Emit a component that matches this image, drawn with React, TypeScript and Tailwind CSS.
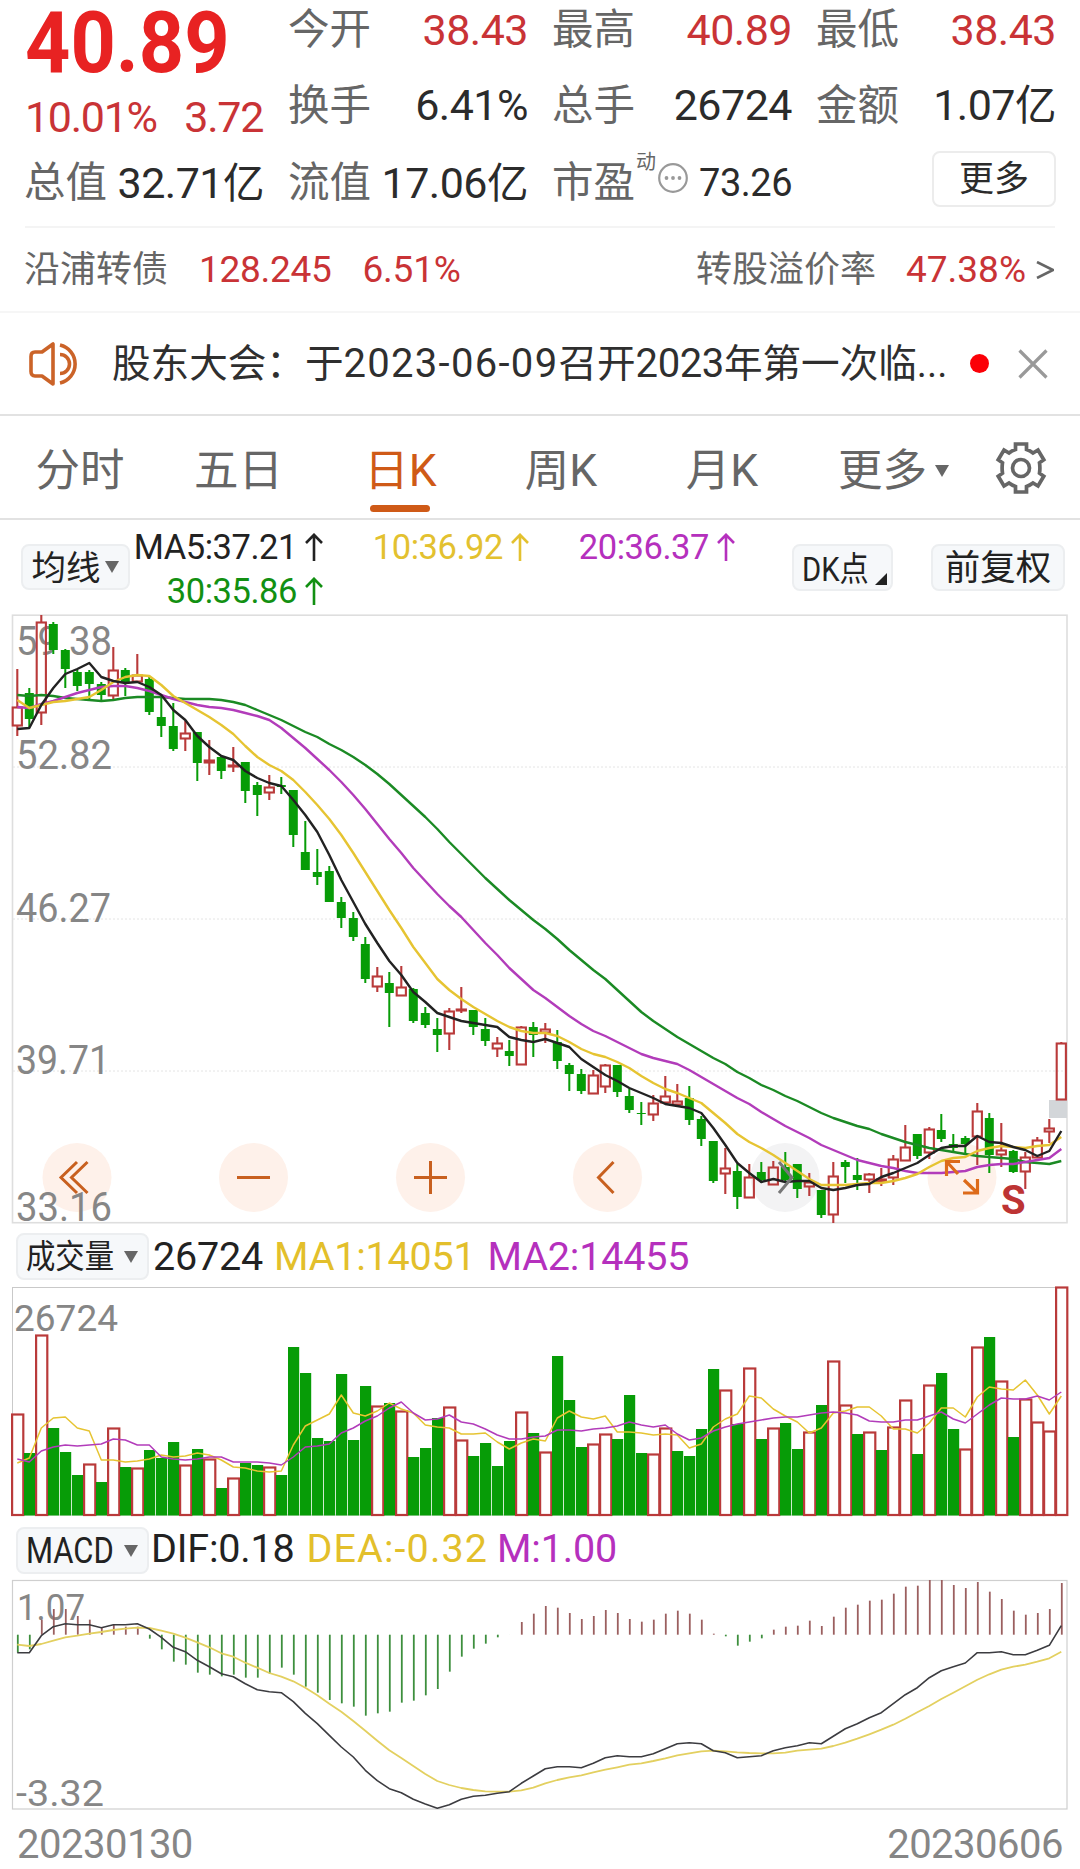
import type { ReactNode } from "react";

// [direction, high, body top, body bottom, low, volume top]
type Candle = ["r" | "g", number, number, number, number, number];

const STEP = 12;
const X0 = 17.3;
const xAt = (i: number) => X0 + i * STEP;

const candles: Candle[] = [
  ["r", 69, 107, 126, 136, 134], ["g", 88, 93, 119, 127, 173], ["r", 15, 22, 113, 125, 55], ["g", 22, 24, 50, 54, 148],
  ["g", 49, 50, 69, 88, 172], ["g", 70, 72, 86, 91, 195], ["g", 70, 72, 84, 101, 184], ["g", 82, 84, 95, 101, 202],
  ["r", 47, 70, 96, 99, 148], ["g", 68, 70, 82, 96, 187], ["r", 54, 75, 82, 82, 188], ["g", 77, 79, 112, 115, 170],
  ["g", 95, 117, 126, 137, 178], ["g", 103, 126, 149, 151, 162], ["r", 121, 133, 139, 151, 185], ["g", 132, 132, 163, 181, 169],
  ["r", 140, 160, 163, 175, 179], ["g", 156, 157, 171, 179, 208], ["r", 147, 165, 167, 172, 198], ["g", 162, 162, 191, 203, 183],
  ["g", 182, 185, 195, 216, 185], ["r", 175, 187, 193, 200, 187], ["g", 177, 185, 187, 194, 195], ["g", 190, 190, 235, 247, 67],
  ["g", 221, 252, 270, 270, 93], ["g", 249, 272, 277, 285, 158], ["g", 266, 271, 302, 302, 161], ["g", 297, 302, 318, 328, 94],
  ["g", 312, 318, 337, 341, 160], ["g", 337, 344, 379, 383, 106], ["r", 367, 376, 387, 392, 126], ["g", 372, 383, 393, 427, 123],
  ["r", 366, 387, 396, 396, 131], ["g", 388, 389, 421, 423, 177], ["g", 407, 413, 425, 428, 168], ["g", 418, 429, 435, 452, 138],
  ["r", 408, 411, 434, 450, 127], ["r", 387, 409, 411, 413, 160], ["g", 410, 410, 427, 435, 176], ["g", 418, 429, 441, 446, 163],
  ["r", 437, 443, 449, 457, 186], ["g", 440, 451, 456, 466, 161], ["r", 426, 427, 465, 465, 132], ["g", 422, 427, 435, 457, 153],
  ["r", 423, 429, 433, 443, 172], ["g", 430, 442, 461, 469, 76], ["g", 463, 465, 474, 491, 120], ["g", 469, 474, 491, 494, 167],
  ["r", 470, 475, 494, 494, 164], ["r", 464, 465, 487, 493, 154], ["g", 465, 465, 492, 497, 159], ["g", 489, 496, 510, 513, 115],
  ["g", 502, 513, 514, 525, 173], ["r", 495, 503, 515, 521, 174], ["r", 476, 496, 503, 503, 148], ["r", 484, 501, 505, 505, 171],
  ["g", 486, 498, 520, 525, 176], ["g", 516, 519, 539, 546, 149], ["g", 541, 541, 581, 583, 89], ["r", 548, 568, 574, 594, 110],
  ["g", 564, 571, 597, 609, 144], ["r", 564, 577, 598, 598, 88], ["g", 562, 572, 580, 583, 159], ["r", 561, 567, 585, 585, 148],
  ["g", 552, 567, 580, 583, 143], ["g", 564, 564, 589, 598, 169], ["r", 573, 582, 587, 596, 152], ["g", 590, 590, 615, 618, 125],
  ["r", 562, 576, 615, 623, 81], ["g", 560, 562, 567, 583, 125], ["g", 558, 575, 580, 590, 154], ["r", 573, 574, 580, 593, 152],
  ["r", 568, 579, 582, 586, 170], ["r", 555, 559, 578, 585, 147], ["r", 525, 547, 561, 561, 120], ["g", 534, 534, 556, 559, 174],
  ["r", 527, 529, 553, 559, 105], ["g", 514, 530, 539, 542, 93], ["g", 534, 544, 548, 553, 149], ["g", 536, 538, 544, 554, 169],
  ["r", 503, 511, 537, 565, 67], ["g", 513, 518, 555, 573, 57], ["r", 523, 550, 555, 567, 101], ["g", 550, 551, 572, 573, 157],
  ["r", 552, 557, 572, 589, 119], ["r", 537, 540, 558, 558, 142], ["r", 519, 528, 532, 543, 151], ["r", 442, 443, 500, 500, 7],
];

// days whose volume bar has the other colour than the candle
const hollowVolume = new Set([6, 69, 79]);
const solidVolume = new Set([40, 55, 72]);

const ma5 = [129, 128, 105, 88, 74, 69, 63, 77, 81, 83, 82, 87, 95, 110, 120, 136, 147, 156, 160, 171, 178, 183, 186, 200, 215, 232, 255, 280, 302, 324, 343, 361, 375, 392, 402, 413, 417, 421, 423, 425, 427, 437, 440, 442, 439, 443, 447, 459, 467, 475, 481, 488, 493, 498, 504, 506, 508, 513, 528, 545, 563, 573, 582, 579, 582, 581, 581, 588, 590, 588, 585, 584, 577, 573, 568, 563, 555, 548, 546, 546, 536, 542, 543, 547, 550, 556, 551, 531];
const ma10 = [100, 108, 105, 102, 101, 99, 97, 90, 82, 77, 75, 76, 85, 96, 103, 110, 117, 125, 134, 146, 157, 165, 171, 180, 192, 205, 219, 235, 253, 272, 291, 310, 328, 347, 363, 379, 390, 399, 407, 414, 421, 427, 431, 433, 433, 436, 442, 449, 454, 457, 462, 468, 476, 483, 489, 493, 498, 503, 513, 523, 534, 542, 548, 555, 563, 571, 579, 585, 585, 585, 584, 583, 583, 581, 578, 574, 567, 561, 558, 557, 551, 548, 546, 547, 548, 546, 545, 537];
const ma20 = [107, 108, 104, 101, 97, 93, 90, 87, 86, 86, 88, 91, 95, 99, 102, 105, 107, 108, 110, 113, 116, 120, 128, 138, 148, 159, 170, 182, 195, 209, 224, 239, 253, 268, 281, 294, 306, 317, 330, 343, 355, 368, 379, 390, 398, 407, 416, 424, 431, 436, 442, 448, 454, 458, 461, 464, 470, 477, 484, 491, 498, 504, 512, 519, 526, 532, 538, 545, 550, 555, 560, 563, 566, 568, 571, 573, 573, 573, 572, 571, 567, 565, 564, 564, 562, 560, 558, 549];
const ma30 = [95, 96, 95, 96, 98, 99, 100, 101, 100, 98, 97, 97, 97, 98, 99, 99, 99, 100, 102, 105, 110, 115, 120, 126, 132, 137, 144, 150, 157, 165, 174, 184, 195, 206, 217, 229, 242, 254, 266, 278, 289, 300, 310, 320, 329, 339, 350, 360, 370, 379, 390, 401, 412, 421, 429, 437, 444, 451, 458, 464, 472, 478, 485, 490, 496, 501, 507, 513, 518, 522, 526, 529, 534, 538, 542, 545, 548, 550, 552, 554, 556, 557, 558, 559, 562, 563, 564, 561];

const volMa1 = [183, 178, 148, 138, 137, 148, 151, 180, 180, 182, 181, 179, 175, 177, 176, 173, 175, 180, 187, 188, 191, 192, 191, 165, 146, 140, 134, 115, 133, 136, 131, 123, 129, 133, 145, 147, 148, 154, 154, 153, 162, 169, 163, 159, 161, 138, 131, 137, 139, 136, 152, 152, 153, 155, 154, 155, 168, 164, 147, 139, 134, 116, 118, 129, 136, 142, 153, 148, 133, 131, 127, 127, 136, 149, 149, 153, 143, 128, 128, 137, 117, 107, 109, 110, 100, 115, 134, 116];
const volMa2 = [179, 182, 171, 167, 165, 166, 165, 164, 159, 160, 165, 165, 177, 179, 180, 179, 177, 177, 182, 182, 182, 183, 185, 177, 167, 166, 164, 153, 148, 141, 136, 128, 122, 133, 140, 139, 135, 142, 144, 149, 155, 159, 159, 157, 156, 150, 150, 151, 149, 148, 146, 142, 145, 147, 145, 154, 160, 158, 151, 147, 144, 142, 140, 138, 137, 137, 135, 133, 132, 133, 135, 141, 142, 142, 140, 140, 136, 132, 139, 143, 134, 125, 118, 119, 119, 116, 120, 112];

const macdBars = [398, 388, 299, 267, 267, 288, 299, 322, 315, 320, 320, 356, 388, 425, 434, 458, 464, 469, 464, 473, 473, 462, 443, 464, 500, 518, 540, 550, 560, 587, 580, 575, 548, 542, 526, 507, 455, 410, 386, 371, 352, 344, 306, 281, 258, 263, 279, 297, 288, 270, 279, 297, 305, 299, 281, 272, 281, 299, 341, 349, 377, 365, 355, 329, 320, 317, 302, 318, 290, 263, 254, 242, 239, 221, 200, 197, 180, 180, 195, 204, 186, 215, 237, 272, 284, 279, 267, 189];
const dif = [398, 398, 347, 320, 311, 314, 314, 323, 314, 314, 311, 327, 352, 382, 395, 421, 440, 461, 470, 491, 509, 515, 518, 545, 580, 611, 646, 681, 711, 751, 782, 806, 818, 838, 852, 865, 854, 838, 829, 826, 820, 815, 790, 768, 746, 740, 740, 743, 730, 713, 707, 710, 710, 701, 686, 671, 668, 671, 692, 698, 713, 710, 707, 692, 683, 677, 668, 671, 649, 626, 611, 593, 578, 551, 524, 503, 473, 452, 440, 429, 398, 398, 395, 404, 404, 391, 376, 317];
const dea = [374, 378, 372, 362, 352, 347, 341, 336, 330, 326, 323, 324, 332, 341, 353, 367, 382, 400, 410, 428, 443, 459, 470, 484, 503, 526, 551, 575, 603, 632, 662, 691, 714, 738, 762, 783, 795, 804, 810, 814, 815, 815, 811, 803, 790, 780, 772, 766, 757, 749, 742, 734, 730, 723, 715, 706, 700, 694, 692, 694, 697, 699, 700, 700, 698, 692, 689, 686, 678, 668, 656, 643, 629, 614, 596, 577, 558, 537, 518, 499, 479, 463, 449, 440, 434, 425, 415, 395];
const macdY = (v: number) => v / 3 - 50;
const MACD_ZERO = 64.7;

const RED = "#b93a3a";
const GREEN = "#079c07";

const points = (ys: number[]) => ys.map((y, i) => `${xAt(i).toFixed(1)},${y.toFixed(1)}`).join(" ");

function Line({ ys, color, width = 2.4 }: { ys: number[]; color: string; width?: number }) {
  return <polyline points={points(ys)} fill="none" stroke={color} strokeWidth={width} strokeLinejoin="round" />;
}

function AxisLabel({ x, y, width, size = 40, children }: { x: number; y: number; width: number; size?: number; children: ReactNode }) {
  return (
    <text x={x} y={y} fontSize={size} fill="#868686" textLength={width} lengthAdjust="spacingAndGlyphs">
      {children}
    </text>
  );
}

function Caret({ className }: { className?: string }) {
  return (
    <svg viewBox="0 0 14 12" className={`h-3 w-3.5 ${className ?? ""}`}>
      <path d="M0 0h14L7 12z" fill="currentColor" />
    </svg>
  );
}

function UpArrow() {
  return (
    <svg viewBox="0 0 18 28" className="ml-[8px] h-7 w-[18px]" fill="none" stroke="currentColor" strokeWidth="2.6">
      <path d="M9 28V2M1 10 9 1.8 17 10" />
    </svg>
  );
}

function Quote({ label, value, red }: { label: string; value: ReactNode; red?: boolean }) {
  return (
    <div className="flex items-center justify-between pt-0.5">
      <span className="-ml-px text-[41.500px] text-[#666]">{label}</span>
      <span className={`-mr-px text-[43px] tracking-[-0.5px] ${red ? "text-[#c93336]" : "text-[#2b2b2b]"}`}>{value}</span>
    </div>
  );
}

const Yi = () => <span className="text-[41.500px]">亿</span>;

function Header() {
  return (
    <header className="px-[25px]">
      <div className="grid h-[151px] grid-cols-4 grid-rows-[58px_93px] gap-x-[26px]">
        <div className="row-span-2 text-[#c93336]">
          <div className="h-[85px]">
            <span className="inline-block origin-left scale-x-[0.92] text-[86px] leading-[86px] font-bold text-[#e82222]">40.89</span>
          </div>
          <div className="flex h-16 items-center justify-between text-[43px] tracking-[-1.300px]">
            <span>10.01%</span>
            <span>3.72</span>
          </div>
        </div>
        <Quote label="今开" value="38.43" red />
        <Quote label="最高" value="40.89" red />
        <Quote label="最低" value="38.43" red />
        <Quote label="换手" value="6.41%" />
        <Quote label="总手" value="26724" />
        <Quote label="金额" value={<>1.07<Yi /></>} />
      </div>
      <div className="grid h-[75px] grid-cols-4 gap-x-[26px] pb-[23px]">
        <Quote label="总值" value={<>32.71<Yi /></>} />
        <Quote label="流值" value={<>17.06<Yi /></>} />
        <div className="flex items-center justify-between text-[#666]">
          <div className="flex items-center">
            <span className="-ml-px pt-0.5 text-[41.500px]">市盈</span>
            <span className="mb-[40px] ml-px text-[20px]">动</span>
            <svg viewBox="0 0 30 30" className="mb-2 ml-[2px] size-[30px]" fill="#999">
              <circle cx="15" cy="15" r="13.8" fill="none" stroke="#999" strokeWidth="2.200" />
              <circle cx="8.500" cy="15" r="1.900" />
              <circle cx="15" cy="15" r="1.900" />
              <circle cx="21.500" cy="15" r="1.900" />
            </svg>
          </div>
          <span className="-mr-px pt-0.5 text-[38px] tracking-[-0.500px] text-[#2b2b2b]">73.26</span>
        </div>
        <button className="-mr-px mb-1.5 h-[56px] w-[124px] self-center justify-self-end rounded-lg border-2 border-[#ececec] text-[35px] text-[#2b2b2b]">
          更多
        </button>
      </div>
    </header>
  );
}

function BondRow() {
  return (
    <div className="mx-[25px] flex h-[85px] items-center border-t-2 border-[#f4f4f4] text-[36px] text-[#666]">
      <span className="-ml-px">沿浦转债</span>
      <span className="ml-[31px] text-[37px] tracking-[-0.300px] text-[#c93336]">128.245</span>
      <span className="ml-[31px] text-[37px] tracking-[-0.200px] text-[#c93336]">6.51%</span>
      <span className="ml-auto">转股溢价率</span>
      <span className="ml-[30px] text-[37px] text-[#c93336]">47.38%</span>
      <svg viewBox="0 0 18 18" className="mr-px ml-[10px] size-[18px]" fill="none" stroke="#666" strokeWidth="2.600">
        <path d="M1 1 17 9 1 17" />
      </svg>
    </div>
  );
}

function Notice() {
  return (
    <div className="flex h-[105px] items-center border-y-2 border-t-[#f6f6f6] border-b-[#e2e2e2] pl-[28px]">
      <svg viewBox="0 0 54 44" className="h-11 w-[54px]" fill="none" stroke="#cb6328" strokeWidth="3.600" strokeLinejoin="round">
        <path d="M25 2v40L14 34H7q-4 0-4-4.500v-15Q3 10 7 10h7z" />
        <path d="M32 12.500a9.500 9.500 0 0 1 0 19M32 3a19.500 19.500 0 0 1 0 38" />
      </svg>
      <span className="ml-[30px] text-[38.600px] text-[#2f2f2f]">
        股东大会：于<span className="text-[40px] tracking-[1.300px]">2023-06-09</span>召开<span className="text-[40px] tracking-[-0.400px]">2023</span>年第一次临...
      </span>
      <span className="ml-[23px] size-[19px] rounded-full bg-[#fb0007]" />
      <svg viewBox="0 0 30 30" className="ml-[29px] size-[30px]" fill="none" stroke="#999" strokeWidth="3.200">
        <path d="M1.500 1.500 28.500 28.500M28.500 1.500 1.500 28.500" />
      </svg>
    </div>
  );
}

function Tabs() {
  return (
    <nav className="grid h-[104px] grid-cols-[160px_154px_180px_134px_191px_151px_110px] border-b-2 border-[#e2e2e2] text-center text-[44.500px] text-[#666]">
      <span className="pt-[33px]">分时</span>
      <span className="pt-[33px] pl-[3px]">五日</span>
      <span className="relative pt-[33px] pr-[7px] text-[#cf5a17]">
        日K
        <i className="absolute bottom-[6px] left-[56px] h-[7px] w-[60px] rounded-full bg-[#cf5a17]" />
      </span>
      <span className="pt-[33px]">周K</span>
      <span className="pt-[33px] pr-[3px]">月K</span>
      <span className="flex items-start justify-center pt-[33px] pr-0.5">
        更多
        <Caret className="mt-4 ml-2" />
      </span>
      <svg viewBox="0 0 52 52" className="mt-[26px] ml-[25px] size-[52px]" fill="none" stroke="#666" strokeWidth="3.700">
        <path d="M20.500 2h11v5.500q3.500 1.200 6.500 3.500l5-3 5.800 9.800-4.300 3q.8 5.200 0 10.400l4.300 3L43 44l-5-3q-3 2.300-6.500 3.500V50h-11v-5.500Q17 43.300 14 41l-5 3-5.800-9.800 4.300-3q-.8-5.200 0-10.400l-4.300-3L9 8l5 3q3-2.300 6.500-3.500z" />
        <circle cx="26" cy="26" r="8.500" />
      </svg>
    </nav>
  );
}

function Chip({ className, children }: { className: string; children: ReactNode }) {
  return (
    <button className={`flex shrink-0 items-center justify-center rounded-lg border-2 border-[#eceef0] bg-[#f6f8fa] pt-[3px] text-[#222] ${className}`}>
      {children}
    </button>
  );
}

function MaBar() {
  return (
    <div className="flex h-[79px] pl-[21px]">
      <Chip className="mt-[24px] h-[46px] w-[109px] text-[34.500px]">
        <span className="-ml-px">均线</span>
        <Caret className="mb-1 ml-[4px] text-[#666]" />
      </Chip>
      <div className="-ml-[13px] grid grid-cols-[206px_206px_206px] grid-rows-[44px_44px] pt-[5px] text-[34.500px] tracking-[-0.450px] *:flex *:items-center *:justify-end">
        <span className="text-[#222]">MA5:37.21<UpArrow /></span>
        <span className="text-[#e3c12f]">10:36.92<UpArrow /></span>
        <span className="text-[#b530bd]">20:36.37<UpArrow /></span>
        <span className="text-[#129012]">30:35.86<UpArrow /></span>
      </div>
      <Chip className="mt-[24px] ml-[57px] h-[47px] w-[101px] justify-start! pl-[8px] text-[34px]">
        <span className="w-[73px] origin-left scale-x-[0.86] text-left whitespace-nowrap">DK点</span>
        <svg viewBox="0 0 12 12" className="mt-5 size-3 shrink-0">
          <path d="M12 0v12H0z" fill="#222" />
        </svg>
      </Chip>
      <Chip className="mt-[24px] ml-[38px] h-[47px] w-[134px] text-[35.500px]">前复权</Chip>
    </div>
  );
}

function PriceChart() {
  return (
    <svg viewBox="0 10 1080 618" className="h-[618px] w-[1080px] overflow-visible">
      {[167, 319, 471].map((y) => (
        <line key={y} x1="13" x2="1066" y1={y} y2={y} stroke="#e4e4e4" strokeDasharray="2 2" />
      ))}
      <rect x="12.500" y="15.200" width="1054.500" height="607.500" fill="none" stroke="#dedede" strokeWidth="1.600" />
      {[77, 253.5, 430.5, 607.5, 785, 962].map((cx) => (
        <circle key={cx} cx={cx} cy="577.500" r="34.500" fill={cx === 785 ? "#f3f3f4" : "#fef1ea"} />
      ))}
      <AxisLabel x={16} y={54.5} width={96}>59.38</AxisLabel>
      <AxisLabel x={16} y={168.5} width={96}>52.82</AxisLabel>
      <AxisLabel x={16} y={321.5} width={95}>46.27</AxisLabel>
      <AxisLabel x={16} y={473.5} width={94}>39.71</AxisLabel>
      <AxisLabel x={16} y={621} width={96}>33.16</AxisLabel>
      <rect x="1049" y="500" width="18" height="18" fill="#d3d6d9" />
      {candles.map(([dir, high, top, bottom, low], i) => {
        const x = xAt(i);
        const h = bottom - top;
        if (dir === "g") {
          return (
            <g key={i} fill={GREEN}>
              <rect x={x - 1} y={high} width="2" height={low - high} />
              <rect x={x - 4.5} y={top} width="9" height={h} />
            </g>
          );
        }
        return (
          <g key={i} stroke={RED} strokeWidth="2.100" fill="none">
            <path d={`M${x} ${high}V${top}M${x} ${bottom}V${low}`} />
            <rect x={x - 4.6} y={top + 0.5} width="9.200" height={Math.max(h - 1, 1)} />
          </g>
        );
      })}
      <Line ys={ma30} color="#1b8a24" />
      <Line ys={ma20} color="#b23cba" />
      <Line ys={ma10} color="#e6c432" />
      <Line ys={ma5} color="#222" />
      <g fill="none" stroke="#c8601f" strokeWidth="3">
        <path d="M77 562 61 577.500 77 593M87.500 562 71.500 577.500 87.500 593" />
        <path d="M237 577.500h33" />
        <path d="M414 577.500h33M430.500 561v33" />
        <path d="M613.500 562 598.500 577.500 613.500 593" />
        <path d="M779 562 792 577.500 779 593" stroke="#777" />
        <path d="M946.500 576v-14.500H960M946.500 561.500 958 574M963 593h14.500v-14M977.500 593 964 580" stroke="#dd6b1a" strokeWidth="3.200" />
      </g>
      <text x="1001" y="614" fontSize="40" fontWeight="700" fill="#bd3434">S</text>
    </svg>
  );
}

function IndicatorBar({ name, children }: { name: ReactNode; children: ReactNode }) {
  return (
    <div className="flex h-[52px] items-center pl-4 text-[39.500px] tracking-[-0.200px]">
      <Chip className="h-[47px] w-[133px] justify-between! pt-px! pr-[9px] pl-[8px] tracking-normal">
        {name}
        <Caret className="text-[#666]" />
      </Chip>
      {children}
    </div>
  );
}

function VolumeChart() {
  return (
    <svg viewBox="0 2 1080 242" className="h-[242px] w-[1080px]">
      <rect x="12.500" y="7.500" width="1054.500" height="227.500" fill="none" stroke="#c9c9c9" />
      <AxisLabel x={14} y={51} width={104} size={37}>26724</AxisLabel>
      {candles.map(([dir, , , , , top], i) => {
        const x = xAt(i);
        const hollow = (dir === "r" && !solidVolume.has(i)) || hollowVolume.has(i);
        return hollow ? (
          <rect key={i} x={x - 5.2} y={top + 0.5} width="11.200" height={234.5 - top} fill="#fff" stroke={RED} strokeWidth="2.200" />
        ) : (
          <rect key={i} x={x - 5.3} y={top} width="11.200" height={235.5 - top} fill={GREEN} />
        );
      })}
      <Line ys={volMa1} color="#e6c432" width={1.5} />
      <Line ys={volMa2} color="#b23cba" width={1.5} />
    </svg>
  );
}

function MacdChart() {
  return (
    <svg viewBox="0 6 1080 238" className="h-[238px] w-[1080px]">
      <rect x="12.500" y="10.500" width="1054.500" height="228.500" fill="none" stroke="#cfcfcf" strokeWidth="1.200" />
      <AxisLabel x={17} y={50} width={68} size={37}>1.07</AxisLabel>
      <AxisLabel x={16} y={236} width={88} size={37}>-3.32</AxisLabel>
      {macdBars.map((v, i) => (
        <line key={i} x1={xAt(i) + 0.5} x2={xAt(i) + 0.5} y1={MACD_ZERO} y2={macdY(v)} stroke={v < 344 ? "#9b5f5f" : "#3d8f3d"} strokeWidth="1.800" />
      ))}
      <Line ys={dea.map(macdY)} color="#e3d060" width={1.8} />
      <Line ys={dif.map(macdY)} color="#3c3c40" width={1.6} />
    </svg>
  );
}

export default function App() {
  return (
    <div className="flex h-[1869px] w-[1080px] flex-col overflow-hidden bg-white font-['Roboto','Noto_Sans_CJK_SC',sans-serif] leading-none whitespace-nowrap">
      <Header />
      <BondRow />
      <Notice />
      <Tabs />
      <MaBar />
      <div className="mt-[11px]">
        <PriceChart />
      </div>
      <div className="mt-[2px]">
        <IndicatorBar name={<span className="-mr-3 origin-left scale-x-[0.89] text-[33px]">成交量</span>}>
          <span className="ml-[4px] pt-0.5 text-[#222]">26724</span>
          <span className="ml-[11px] pt-0.5 text-[#e3bf2b]">MA1:14051</span>
          <span className="ml-[12px] pt-0.5 text-[#b530bd]">MA2:14455</span>
        </IndicatorBar>
      </div>
      <VolumeChart />
      <IndicatorBar name={<span className="-mr-3 origin-left scale-x-[0.86] text-[36px]">MACD</span>}>
        <span className="mb-0.5 ml-[2px] text-[#222]">DIF:0.18</span>
        <span className="mb-0.5 ml-[12px] tracking-[1.100px] text-[#e3bf2b]">DEA:-0.32</span>
        <span className="mb-0.5 ml-[9px] text-[#b530bd]">M:1.00</span>
      </IndicatorBar>
      <MacdChart />
      <footer className="flex justify-between px-[17px] pt-[11px] text-[40px] tracking-[-0.500px] text-[#868686]">
        <span>20230130</span>
        <span>20230606</span>
      </footer>
    </div>
  );
}
